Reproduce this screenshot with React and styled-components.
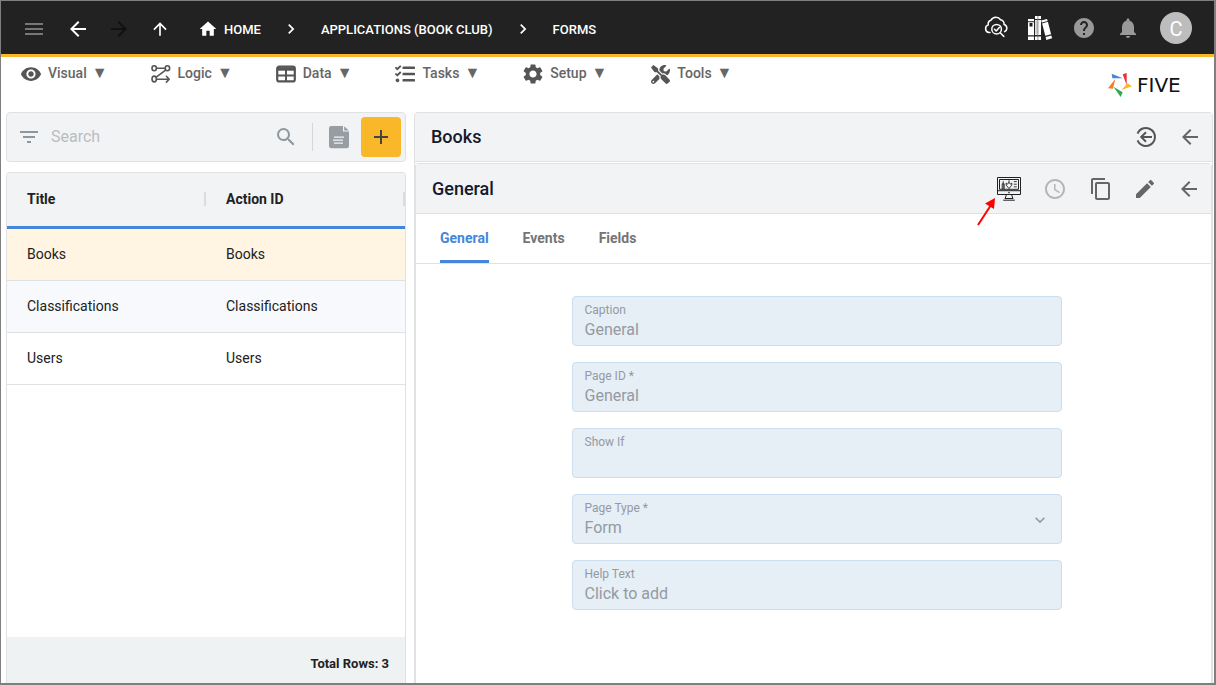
import React from "react";
import styled, { createGlobalStyle, css } from "styled-components";
import {
  MdMenu, MdArrowBack, MdArrowForward, MdArrowUpward, MdHome, MdChevronRight,
  MdHelp, MdNotifications, MdVisibility, MdSettings, MdFilterList, MdSearch,
  MdAdd, MdAccessTime, MdContentCopy, MdEdit, MdKeyboardArrowDown,
} from "react-icons/md";
import { FaTasks, FaTools } from "react-icons/fa";

const Global = createGlobalStyle`
  *, *::before, *::after { box-sizing: border-box; }
  body {
    margin: 0;
    background: #fff;
    color: #212121;
    font-family: Roboto, "Liberation Sans", sans-serif;
    font-size: 14px;
  }
  button, input, select { font: inherit; color: inherit; }
  svg { display: block; flex: none; }
`;

const Page = styled.div`
  display: flex;
  flex-direction: column;
  height: 100vh;
  border: solid #7f7f7f;
  border-width: 1px 2px 2px 1px;
  overflow: hidden;
`;

const TopBar = styled.header`
  display: flex;
  align-items: center;
  justify-content: space-between;
  flex: none;
  height: 56px;
  padding: 0 22px 0 11px;
  background: #222;
  border-bottom: 3px solid #f8b82a;
  color: #fff;
`;

const Crumbs = styled.nav`
  display: flex;
  align-items: center;
  padding-top: 3px;
`;

const Crumb = styled.a`
  display: flex;
  align-items: center;
  gap: 6px;
  color: #fff;
  font-size: 13px;
  font-weight: 500;
  text-decoration: none;
  white-space: nowrap;
`;

const CrumbTrail = styled.div`
  display: flex;
  align-items: center;
  gap: 20px;
  padding-left: 16px;
`;

const IconButton = styled.button`
  display: flex;
  align-items: center;
  justify-content: center;
  width: ${(p) => p.$width || 44}px;
  height: 40px;
  padding: 0;
  border: 0;
  background: none;
  color: ${(p) => p.$color || "#666"};
  cursor: pointer;
`;

const TopActions = styled.div`
  display: flex;
  align-items: center;
`;

const Avatar = styled.button`
  width: 32px;
  height: 32px;
  margin-left: 10px;
  padding: 2px 0 0;
  border: 0;
  border-radius: 50%;
  background: #bdbdbd;
  color: #fff;
  font-size: 20px;
`;

const MenuBar = styled.div`
  display: flex;
  justify-content: space-between;
  flex: none;
  height: 55px;
  padding: 0 18px 0 20px;
`;

const Menus = styled.nav`
  display: flex;
  align-items: flex-start;
  gap: 43px;
  padding-top: 5px;
`;

const MenuButton = styled.button`
  display: flex;
  align-items: center;
  gap: 7px;
  height: 22px;
  padding: 0;
  border: 0;
  background: none;
  color: #666;
  font-size: 14px;
  font-weight: 500;
  white-space: nowrap;
`;

const MenuIcon = styled.span`
  display: flex;
  align-items: center;
  justify-content: center;
  width: 20px;
  padding-top: 2px;
  color: #555;
`;

const MenuLabel = styled.span`
  display: flex;
  align-items: center;
  gap: 5px;
  line-height: 22px;
`;

const Caret = styled.span`
  font-size: 16px;
`;

const Brand = styled.a`
  display: flex;
  align-items: center;
  gap: 5px;
  width: 88px;
  color: #111;
  font-family: "DejaVu Sans", sans-serif;
  font-size: 20px;
  text-decoration: none;
`;

const Main = styled.main`
  display: grid;
  grid-template-columns: minmax(280px, 400px) minmax(0, 1fr);
  gap: 8px;
  flex: 1;
  min-height: 0;
  padding: 0 1px 0 5px;
`;

const ListColumn = styled.section`
  display: flex;
  flex-direction: column;
  gap: 10px;
  min-height: 0;
`;

const SearchBar = styled.div`
  display: flex;
  align-items: center;
  flex: none;
  height: 50px;
  padding: 0 4px 0 10px;
  border: 1px solid #dfe1e2;
  border-radius: 4px;
  background: #f1f3f5;
`;

const SearchInput = styled.input`
  flex: 1;
  min-width: 0;
  height: 40px;
  padding: 0 10px 2px;
  border: 0;
  outline: 0;
  background: none;
  font-size: 16px;
  &::placeholder { color: #b9bdc1; opacity: 1; }
`;

const Divider = styled.span`
  width: 1px;
  height: 28px;
  margin: 0 4px 0 5px;
  background: #d5d8da;
`;

const AddButton = styled.button`
  display: flex;
  align-items: center;
  justify-content: center;
  width: 40px;
  height: 40px;
  padding: 0;
  border: 0;
  border-radius: 4px;
  background: #f8b82a;
  color: #444;
`;

const ListCard = styled.div`
  display: flex;
  flex-direction: column;
  flex: 1;
  min-height: 0;
  border: 1px solid #dfe1e2;
  border-bottom: 0;
  border-radius: 4px 4px 0 0;
  overflow: hidden;
`;

const Table = styled.table`
  width: 100%;
  table-layout: fixed;
  border-collapse: separate;
  border-spacing: 0;
`;

const HeadCell = styled.th`
  height: 56px;
  padding: 0 0 2px 20px;
  border-bottom: 3px solid #4386da;
  background: #f1f3f5;
  font-size: 14px;
  font-weight: 700;
  text-align: left;
`;

const HeadLabel = styled.span`
  display: flex;
  align-items: center;
  justify-content: space-between;
  &::after {
    content: "";
    width: 2px;
    height: 14px;
    background: #dadde0;
  }
`;

const rowFill = { selected: "#fff5e2", shaded: "#f7f9fc", plain: "#fff" };

const Row = styled.tr`
  background: ${(p) => rowFill[p.$tone]};
`;

const Cell = styled.td`
  height: 52px;
  padding: 0 20px 2px;
  border-bottom: 1px solid #dfe1e2;
`;

const ListFooter = styled.footer`
  display: flex;
  align-items: center;
  justify-content: flex-end;
  height: 46px;
  margin-top: auto;
  padding: 6px 16px 0;
  background: #eef2f3;
  font-size: 13px;
  font-weight: 700;
`;

const Panel = styled.section`
  display: flex;
  flex-direction: column;
  flex: 1;
  min-width: 0;
  min-height: 0;
  border: 1px solid #dfe1e2;
  border-bottom: 0;
  border-radius: 4px 4px 0 0;
  ${(p) => p.$nested && css`margin-top: 1px;`}
`;

const PanelHeader = styled.header`
  display: flex;
  align-items: center;
  justify-content: space-between;
  flex: none;
  height: ${(p) => (p.$nested ? 50 : 49)}px;
  padding: 0 0 0 16px;
  border-bottom: 1px solid #dfe1e2;
  background: #f1f3f5;
`;

const PanelTitle = styled.h2`
  margin: 0;
  color: #14192b;
  font-size: 18px;
  line-height: 22px;
  font-weight: 500;
`;

const Tools = styled.div`
  display: flex;
  align-items: center;
`;

const Pointed = styled.div`
  position: relative;
`;

const PointerArrow = styled.svg`
  position: absolute;
  top: 28px;
  left: -10px;
  pointer-events: none;
`;

const Tabs = styled.div`
  display: flex;
  gap: 34px;
  flex: none;
  height: 50px;
  padding: 0 24px;
  border-bottom: 1px solid #dfe1e2;
`;

const Tab = styled.button`
  height: 49px;
  padding: 1px 0 0;
  border: 0;
  border-bottom: 3px solid ${(p) => (p.$active ? "#4386da" : "transparent")};
  background: none;
  color: ${(p) => (p.$active ? "#4386da" : "#757575")};
  font-size: 14px;
  font-weight: 700;
`;

const Form = styled.form`
  display: flex;
  flex-direction: column;
  align-items: center;
  gap: 16px;
  padding: 32px 0 0 6px;
`;

const FieldBox = styled.div`
  display: grid;
  grid-template-columns: 1fr auto;
  align-content: start;
  width: 100%;
  max-width: 490px;
  height: 50px;
  padding: 5px 11px 0 12px;
  border: 1px solid #cbdff0;
  border-radius: 4px;
  background: #e6eef6;
  color: #949aa2;
  svg { grid-column: 2; grid-row: 1 / 3; align-self: center; }
`;

const FieldLabel = styled.label`
  font-size: 12px;
  line-height: 16px;
`;

const control = css`
  grid-column: 1;
  width: 100%;
  height: 24px;
  padding: 0;
  border: 0;
  outline: 0;
  background: none;
  color: #949aa2;
  font-size: 16px;
  line-height: 24px;
`;

const FieldInput = styled.input`
  ${control}
  &::placeholder { color: #949aa2; opacity: 1; }
`;

const FieldSelect = styled.select`
  ${control}
  appearance: none;
`;

const CloudSearchIcon = () => (
  <svg width="24" height="24" viewBox="0 0 24 24" fill="none" stroke="#fff" strokeWidth="1.5" strokeLinecap="round" strokeLinejoin="round">
    <path d="M6 16.5H5.2A3.9 3.9 0 0 1 4.3 8.9A4 4 0 0 1 7 4.2A5.7 5.7 0 0 1 16.6 3.8A4.6 4.6 0 0 1 20.1 8.5A3.8 3.8 0 0 1 20.6 15.6" />
    <circle cx="12.6" cy="13.2" r="4.8" />
    <path d="M10.5 13.2l1.7 1.8 3.1-3.6M16.2 16.8l3.6 3.6" />
  </svg>
);

const BooksIcon = () => (
  <svg width="26" height="26" viewBox="0 0 26 26" fill="#fff">
    <path d="M1 4h6v2.2H1zM1 7.2h6v13H1zM1 21.4h6V25H1z" />
    <path d="M2.5 8h3v3.5h-3z" fill="#222" />
    <path d="M8 1h6v3H8zM8 5h6v15H8zM8 21.4h6V25H8z" />
    <path d="M8.4 5.4h2.4v14H8.4z" fill="#ccc" />
    <path d="M10.9 1v24" stroke="#777" strokeWidth=".8" />
    <path d="M14.2 5.4l5.8-1.5.6 2-5.8 1.6zM15.1 8.4l5.8-1.6 3.2 12.5-5.8 1.5zM18.6 22l5.8-1.5.7 2.7-5.8 1.7z" />
  </svg>
);

const LogicIcon = () => (
  <svg width="20" height="20" viewBox="0 0 20 20" fill="none" stroke="#555" strokeWidth="1.6" strokeLinecap="round" strokeLinejoin="round">
    <ellipse cx="3.2" cy="4.3" rx="2.2" ry="2.5" />
    <ellipse cx="16.4" cy="4.3" rx="2.2" ry="2.5" />
    <ellipse cx="3.2" cy="15" rx="2.2" ry="2.9" />
    <path d="M5.6 4.3h8.4M14.6 6.2L5.2 13.2M5.6 15.2h12.4M15.4 12.3l2.8 2.9-2.8 2.9" />
  </svg>
);

const GridIcon = () => (
  <svg width="20" height="20" viewBox="0 0 20 20" fill="none" stroke="#555">
    <rect x="1.2" y="2.6" width="17.6" height="14.8" rx="2" strokeWidth="2.2" />
    <path d="M1 5h18" strokeWidth="3.4" />
    <path d="M10 5v12M1 11.6h18" strokeWidth="2" />
  </svg>
);

const DocumentIcon = () => (
  <svg width="20" height="24" viewBox="0 0 20 24" fill="#979da3">
    <path d="M2.5 1H14v5.5h6V21a2.3 2.3 0 0 1-2.3 2.3H2.3A2.3 2.3 0 0 1 0 21V3.3A2.3 2.3 0 0 1 2.5 1z" />
    <path d="M15.2 1.2L19.8 5.4h-4.6z" />
    <path d="M5 12.2h10M4 15.2h10M5 18.2h9" stroke="#f1f3f5" strokeWidth="1.3" />
  </svg>
);

const CircleBackIcon = () => (
  <svg width="22" height="22" viewBox="0 0 22 22" fill="none" stroke="#555" strokeWidth="2">
    <path d="M2.6 7.6A9 9 0 1 1 2.6 14.4" />
    <path d="M17 11H6M11 6.2L6.2 11l4.8 4.8" />
  </svg>
);

const MonitorIcon = () => (
  <svg width="26" height="26" viewBox="0 0 26 26" fill="none" stroke="#222" strokeWidth="1">
    <path d="M1.5 1.5h23v17h-23zM1.5 14.7h23M3.5 3.5h19v9.8h-19z" />
    <path d="M10.4 18.5l-1.2 4M15.6 18.5l1.2 4M7.2 24.2h11.6M8.8 22.5h8.4" />
    <path d="M7.2 13V5.2M6.2 13V7.8h2v5.2M13 4.2v2.4M10.2 9.2V7l1.4 1.2L13 6.2l1.4 2L15.8 7v2.2L13 12.6zM17.8 5.6h3M17.8 8.2h3M17.8 10.8h3" strokeWidth=".9" />
    <circle cx="13" cy="16.6" r=".8" fill="#222" stroke="none" />
  </svg>
);

const Pinwheel = () => (
  <svg width="24" height="24" viewBox="444 219 72 72">
    <path d="M455 221L488 235L457 235Z" fill="#4386da" />
    <path d="M488 223L500 219L500 256Z" fill="#e53238" />
    <path d="M503 250L516 259L484 270Z" fill="#f8b82a" />
    <path d="M460 260L488 277L482 291Z" fill="#35a853" />
    <path d="M466 236L459 266L444 265Z" fill="#f57c2b" />
  </svg>
);

const menus = [
  ["Visual", <MdVisibility size={22} />],
  ["Logic", <LogicIcon />],
  ["Data", <GridIcon />],
  ["Tasks", <FaTasks size={20} />],
  ["Setup", <MdSettings size={24} />],
  ["Tools", <FaTools size={19} />],
];

const rows = [
  ["Books", "selected"],
  ["Classifications", "shaded"],
  ["Users", "plain"],
];

function Field({ id, label, children, icon }) {
  return (
    <FieldBox>
      <FieldLabel htmlFor={id}>{label}</FieldLabel>
      {children}
      {icon}
    </FieldBox>
  );
}

export default function App() {
  return (
    <Page>
      <Global />
      <TopBar>
        <Crumbs aria-label="Breadcrumb">
          <IconButton $color="#777" aria-label="Menu"><MdMenu size={24} /></IconButton>
          <IconButton $color="#fff" aria-label="Back"><MdArrowBack size={24} /></IconButton>
          <IconButton $width={38} $color="#111" aria-label="Forward"><MdArrowForward size={24} /></IconButton>
          <IconButton $color="#fff" aria-label="Up"><MdArrowUpward size={20} /></IconButton>
          <CrumbTrail>
            <Crumb href="#home"><MdHome size={20} />HOME</Crumb>
            <MdChevronRight size={20} />
            <Crumb href="#applications">APPLICATIONS (BOOK CLUB)</Crumb>
            <MdChevronRight size={20} />
            <Crumb href="#forms">FORMS</Crumb>
          </CrumbTrail>
        </Crumbs>
        <TopActions>
          <IconButton $color="#fff" aria-label="Inspect"><CloudSearchIcon /></IconButton>
          <IconButton $color="#fff" aria-label="Library"><BooksIcon /></IconButton>
          <IconButton $color="#999" aria-label="Help"><MdHelp size={24} /></IconButton>
          <IconButton $color="#999" aria-label="Notifications"><MdNotifications size={24} /></IconButton>
          <Avatar aria-label="Account">C</Avatar>
        </TopActions>
      </TopBar>

      <MenuBar>
        <Menus aria-label="Main">
          {menus.map(([name, icon]) => (
            <MenuButton key={name}>
              <MenuIcon>{icon}</MenuIcon>
              <MenuLabel>{name}<Caret>▼</Caret></MenuLabel>
            </MenuButton>
          ))}
        </Menus>
        <Brand href="#five"><Pinwheel />FIVE</Brand>
      </MenuBar>

      <Main>
        <ListColumn>
          <SearchBar>
            <MdFilterList size={24} color="#8f979e" />
            <SearchInput type="search" placeholder="Search" aria-label="Search" />
            <IconButton $width={42} $color="#8f979e" aria-label="Run search"><MdSearch size={24} /></IconButton>
            <Divider />
            <IconButton aria-label="Notes"><DocumentIcon /></IconButton>
            <AddButton aria-label="Add"><MdAdd size={24} /></AddButton>
          </SearchBar>
          <ListCard>
            <Table>
              <thead>
                <tr>
                  <HeadCell scope="col"><HeadLabel>Title</HeadLabel></HeadCell>
                  <HeadCell scope="col"><HeadLabel>Action ID</HeadLabel></HeadCell>
                </tr>
              </thead>
              <tbody>
                {rows.map(([name, tone]) => (
                  <Row key={name} $tone={tone}>
                    <Cell>{name}</Cell>
                    <Cell>{name}</Cell>
                  </Row>
                ))}
              </tbody>
            </Table>
            <ListFooter>Total Rows: 3</ListFooter>
          </ListCard>
        </ListColumn>

        <Panel>
          <PanelHeader>
            <PanelTitle>Books</PanelTitle>
            <Tools>
              <IconButton $color="#555" aria-label="Leave form"><CircleBackIcon /></IconButton>
              <IconButton aria-label="Back to list"><MdArrowBack size={24} /></IconButton>
            </Tools>
          </PanelHeader>
          <Panel $nested>
            <PanelHeader $nested>
              <PanelTitle>General</PanelTitle>
              <Tools>
                <Pointed>
                  <IconButton aria-label="Preview"><MonitorIcon /></IconButton>
                  <PointerArrow width="20" height="30" viewBox="0 0 20 30" aria-hidden="true">
                    <path d="M1 28L14 8" stroke="#f00" strokeWidth="2" />
                    <path d="M18 1L17 12L8 6.5Z" fill="#f00" />
                  </PointerArrow>
                </Pointed>
                <IconButton $width={48} $color="#b5b5b5" aria-label="History"><MdAccessTime size={24} /></IconButton>
                <IconButton aria-label="Copy"><MdContentCopy size={24} /></IconButton>
                <IconButton aria-label="Edit"><MdEdit size={24} /></IconButton>
                <IconButton aria-label="Back"><MdArrowBack size={24} /></IconButton>
              </Tools>
            </PanelHeader>
            <Tabs role="tablist">
              <Tab role="tab" aria-selected="true" $active>General</Tab>
              <Tab role="tab" aria-selected="false">Events</Tab>
              <Tab role="tab" aria-selected="false">Fields</Tab>
            </Tabs>
            <Form>
              <Field id="caption" label="Caption">
                <FieldInput id="caption" readOnly defaultValue="General" />
              </Field>
              <Field id="page-id" label="Page ID *">
                <FieldInput id="page-id" readOnly defaultValue="General" />
              </Field>
              <Field id="show-if" label="Show If">
                <FieldInput id="show-if" readOnly />
              </Field>
              <Field id="page-type" label="Page Type *" icon={<MdKeyboardArrowDown size={20} />}>
                <FieldSelect id="page-type" defaultValue="Form">
                  <option>Form</option>
                </FieldSelect>
              </Field>
              <Field id="help-text" label="Help Text">
                <FieldInput id="help-text" readOnly placeholder="Click to add" />
              </Field>
            </Form>
          </Panel>
        </Panel>
      </Main>
    </Page>
  );
}
